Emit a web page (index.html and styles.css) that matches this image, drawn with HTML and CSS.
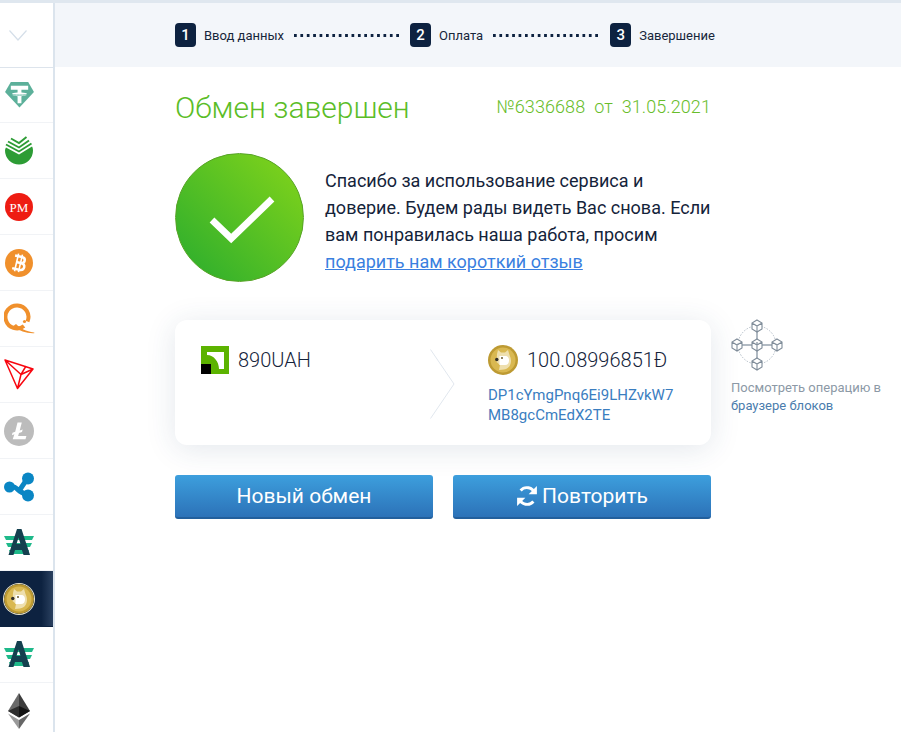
FILE: index.html
```html
<!DOCTYPE html>
<html lang="ru">
<head>
<meta charset="utf-8">
<title>Обмен завершен</title>
<link rel="stylesheet" href="styles.css">
</head>
<body>
<div class="page">
  <aside class="rail">
    <div class="rail-top">
      <svg width="18" height="11" viewBox="0 0 18 11"><path d="M.5.5 9 10 17.5.5" fill="none" stroke="#d5dfe9" stroke-width="1.2"/></svg>
    </div>
    <div class="coin">
      <svg width="31" height="27" viewBox="0 0 32 28"><path d="M7 1h18l6 10.500L16 27.500 1 11.500z" fill="#5cb09a"/><path d="M7 5h18v4h-7v3c3 .2 6 .8 6 1.800s-3 1.700-6 1.900V23h-4v-7.300c-3-.2-6-.9-6-1.900s3-1.600 6-1.800V9H7z" fill="#fff"/><path d="M6 13.500c2 1.500 18 1.500 20 0" fill="none" stroke="#5cb09a" stroke-width="1"/></svg>
    </div>
    <div class="coin">
      <svg width="30" height="30" viewBox="0 0 30 30"><path d="M1 14.500A14 14 0 1 0 29 14.500C29 13 28.700 11.500 28 10.500L15 18.500 2 11.500C1.300 12.500 1 13.500 1 14.500z" fill="#2d9c35"/><path d="M2 8.500 15 15.500 27.500 7.500M4 5.500 15 11.500 25 4.500M7 2.500 15 7 22.500 1" fill="none" stroke="#2d9c35" stroke-width="1.900"/></svg>
    </div>
    <div class="coin">
      <svg width="28" height="28" viewBox="0 0 28 28"><circle cx="14" cy="14" r="14" fill="#ee1c12"/><text x="14" y="19" class="pm" text-anchor="middle">PM</text></svg>
    </div>
    <div class="coin">
      <svg width="28" height="28" viewBox="0 0 28 28"><circle cx="14" cy="14" r="14" fill="#f0902c"/><g transform="rotate(13 14 14)"><path d="M11.500 5v18M15.500 5v18" stroke="#fff" stroke-width="1.600"/><path d="M8.500 7.500h7c2.500 0 3.500 1.400 3.500 3s-1 3.100-3.500 3.100c3 0 4.500 1.500 4.500 3.300s-1.500 3.600-4.500 3.600h-7M11 13.600h4.500" fill="none" stroke="#fff" stroke-width="2.500"/></g></svg>
    </div>
    <div class="coin">
      <svg width="31" height="31" viewBox="0 0 31 31"><path d="M20 23A11.500 11.500 0 1 1 23.500 18.500" fill="none" stroke="#f0902c" stroke-width="4"/><path d="M12 21c4 4 10 7.500 18 8.500.8.200.5.800-.5.800-7 .2-14-2-20.500-7z" fill="#f0902c"/><circle cx="20.500" cy="18.500" r="1.600" fill="#f0902c"/></svg>
    </div>
    <div class="coin">
      <svg width="30" height="31" viewBox="0 0 30 31"><path d="M1 1 29 10 13.500 29.500zM1 1 17 15.500 13.500 29.500M17 15.500 29 10M17 15.500 22 7" fill="none" stroke="#f8060f" stroke-width="1.500" stroke-linejoin="round"/></svg>
    </div>
    <div class="coin">
      <svg width="30" height="30" viewBox="0 0 30 30"><circle cx="15" cy="15" r="15" fill="#bcbcbc"/><path d="M13.500 6.500h4.300l-2.100 8 3-1.100-.7 2.500-3 1.100-.9 3h8.300l-.9 3.300H8.700l1.700-5.100-2.500 1 .6-2.400 2.700-1z" fill="#fff"/></svg>
    </div>
    <div class="coin">
      <svg width="30" height="30" viewBox="0 0 30 30"><path d="M6 15c5-1 6 1 9 3.500 3-2.500 4-8 9-11.500M15 18.500c2.500 2 5 3 9 5" fill="none" stroke="#0a86c4" stroke-width="5"/><circle cx="5.500" cy="15" r="5.500" fill="#0a86c4"/><circle cx="24" cy="6.500" r="6" fill="#0a86c4"/><circle cx="24" cy="23.500" r="6" fill="#0a86c4"/></svg>
    </div>
    <div class="coin">
      <svg width="30" height="28" viewBox="0 0 30 28"><use href="#adv-mark"/></svg>
    </div>
    <div class="coin active">
      <svg class="doge-ringed" width="30" height="30" viewBox="0 0 30 30"><use href="#doge-mark"/></svg>
    </div>
    <div class="coin">
      <svg width="30" height="28" viewBox="0 0 30 28"><use href="#adv-mark"/></svg>
    </div>
    <div class="coin">
      <svg width="22" height="36" viewBox="0 0 22 36"><path d="M11 0 0 18l11 6.500z" fill="#6a6a6a"/><path d="M11 0l11 18-11 6.500z" fill="#3d3d3d"/><path d="M0 18l11-5v11.500z" fill="#2e2e2e"/><path d="M22 18l-11-5v11.500z" fill="#151515"/><path d="M0 20.500 11 36v-9z" fill="#9a9a9a"/><path d="M22 20.500 11 36v-9z" fill="#666"/></svg>
    </div>
  </aside>

  <main class="main">
    <nav class="steps">
      <span class="num">1</span><span class="label">Ввод данных</span><span class="dots dots-a"></span>
      <span class="num">2</span><span class="label">Оплата</span><span class="dots dots-b"></span>
      <span class="num">3</span><span class="label">Завершение</span>
    </nav>

    <section class="content">
      <div class="column">
        <header class="title-row">
          <h1>Обмен завершен</h1>
          <p class="order">№6336688&nbsp; от&nbsp; 31.05.2021</p>
        </header>

        <div class="thanks">
          <div class="check">
            <svg width="70" height="54" viewBox="0 0 70 54"><path d="M7 29 26.200 47.500 67 8" fill="none" stroke="#fff" stroke-width="6.800"/></svg>
          </div>
          <p>Спасибо за использование сервиса и доверие. Будем рады видеть Вас снова. Если вам понравилась наша работа, просим <a href="#">подарить нам короткий отзыв</a></p>
        </div>

        <div class="card">
          <div class="side from">
            <div class="amount">
              <svg width="28" height="28" viewBox="0 0 28 28"><rect width="28" height="28" fill="#5cb300"/><path d="M6 6h17v17h-5c0-7-5-14-12-14z" fill="#fff"/><path d="M0 18h10v10H0z" fill="#000"/></svg>
              <span>890UAH</span>
            </div>
          </div>
          <svg class="divider" width="25" height="70" viewBox="0 0 25 70"><path d="M.5.500 24 35 .5 69.500" fill="none" stroke="#e1e7ee" stroke-width="1"/></svg>
          <div class="side to">
            <div class="amount">
              <svg width="30" height="30" viewBox="0 0 30 30"><use href="#doge-mark"/></svg>
              <span>100.08996851Ð</span>
            </div>
            <a class="wallet" href="#">DP1cYmgPnq6Ei9LHZvkW7 MB8gcCmEdX2TE</a>
          </div>
        </div>

        <div class="actions">
          <a class="btn" href="#">Новый обмен</a>
          <a class="btn repeat" href="#">
            <svg width="22" height="22" viewBox="0 0 20 20"><path d="M17 7.500A7.500 7.500 0 0 0 4.200 5M3 12.500A7.500 7.500 0 0 0 15.800 15" fill="none" stroke="#fff" stroke-width="2.600"/><path d="M19 1v7.500h-7.500zM1 19v-7.500h7.500z" fill="#fff"/></svg>
            <span>Повторить</span>
          </a>
        </div>
      </div>

      <aside class="explorer">
        <svg width="52" height="52" viewBox="0 0 52 52">
          <circle cx="26" cy="26" r="19" fill="none" stroke="#a9b4bf" stroke-width=".9" stroke-dasharray="1.500 1.500"/>
          <path d="M26 11v30M11 26h30" stroke="#98a4b0" stroke-width="1.500"/>
          <g fill="#fff" stroke="#7f8c99" stroke-width="1.100">
            <path d="M26 1l5 3v6l-5 3-5-3V4zM21 4l5 3 5-3M26 7v6"/>
            <path d="M26 20l5 3v6l-5 3-5-3v-6zM21 23l5 3 5-3M26 26v6"/>
            <path d="M26 39l5 3v6l-5 3-5-3v-6zM21 42l5 3 5-3M26 45v6"/>
            <path d="M6 20l5 3v6l-5 3-5-3v-6zM1 23l5 3 5-3M6 26v6"/>
            <path d="M46 20l5 3v6l-5 3-5-3v-6zM41 23l5 3 5-3M46 26v6"/>
          </g>
        </svg>
        <p>Посмотреть операцию в <a href="#">браузере блоков</a></p>
      </aside>
    </section>
  </main>
</div>

<svg class="defs" width="0" height="0" aria-hidden="true">
  <defs>
    <g id="adv-mark">
      <path d="M0 7h30l-2 4H2zM2 14h26l-2 4H4zM5 21h20l-1.500 4h-17z" fill="#1fb98a"/>
      <path d="M13 0h4.500L26 26h-6.500l-1.600-5H11l-1.500 5H4.500zM12.500 15h4l-2-6.500z" fill="#14404f"/>
    </g>
    <g id="doge-mark">
      <circle cx="15" cy="15" r="15" fill="#bd9a32"/>
      <circle cx="15" cy="15" r="12.500" fill="#d9b851"/>
      <path d="M9 9 10 5l3 2.500h4L20 5l1.500 5c1.500 3 2 6 1 9-1 3-3 5-6.500 5.500L11 25l1-5-3.500-3z" fill="#eedfae"/>
      <path d="M11.500 11h5.500c3 0 4 2 4 4.500s-1.200 4.500-4 4.500h-5.500z" fill="#fff"/>
      <circle cx="8.800" cy="14.500" r="1.700" fill="#33302a"/>
      <circle cx="14" cy="13" r="1" fill="#6b5a2c"/>
    </g>
  </defs>
</svg>
</body>
</html>
```

FILE: styles.css
```css
* { box-sizing: border-box; }
html, body { margin: 0; height: 100%; }
body {
  overflow: hidden;
  background: #fff;
  font-family: Roboto, "Liberation Sans", sans-serif;
  color: #0f2138;
}
p, h1 { margin: 0; }
a { color: inherit; }
.defs { position: absolute; }

.page {
  display: flex;
  height: 732px;
  border-top: 3px solid #dfe7ef;
  overflow: hidden;
}

.rail {
  flex: 0 0 55px;
  width: 55px;
  min-width: 0;
  border-right: 2px solid #dbe4ed;
}
.rail-top {
  height: 65px;
  margin-bottom: -1px;
  display: flex;
  align-items: center;
  justify-content: center;
  padding-right: 17px;
  border-bottom: 1px solid #dde4ec;
}
.coin {
  height: 56px;
  display: flex;
  align-items: center;
  justify-content: center;
  border-bottom: 1px solid #f1f3f6;
  padding-right: 15px;
}
.coin.active {
  background: linear-gradient(90deg, #0d2240 78%, #2b4160 100%);
  border-bottom-color: #0d2240;
}
.doge-ringed { border-radius: 50%; box-shadow: 0 0 0 1px #e8e2c8; }
.pm { font: 13px "Liberation Serif", serif; fill: #fff; }

.main { flex: 1; min-width: 0; }

.steps {
  height: 64px;
  background: #f3f6fa;
  padding-left: 120px;
  display: flex;
  align-items: center;
  font-size: 13px;
  color: #17263a;
}
.num {
  width: 21px;
  height: 24px;
  border-radius: 4px;
  background: #0d2240;
  color: #fff;
  font-size: 15px;
  font-weight: 500;
  display: flex;
  align-items: center;
  justify-content: center;
  margin-right: 8px;
}
.dots {
  height: 3px;
  margin: 0 10px;
  background-image: linear-gradient(90deg, #0d2240 50%, transparent 50%);
  background-size: 6.400px 3px;
}
.dots-a { width: 106px; }
.dots-b { width: 108px; margin-right: 9px; }

.content {
  display: flex;
  padding-left: 120px;
}
.column { width: 536px; flex-shrink: 0; }

.title-row {
  display: flex;
  justify-content: space-between;
  align-items: center;
  height: 86px;
  padding-bottom: 6px;
}
h1 {
  font-size: 30px;
  font-weight: 300;
  color: #5bbd27;
}
.order {
  font-size: 18px;
  font-weight: 300;
  color: #68bd2a;
  margin-bottom: 2px;
  letter-spacing: .08px;
}

.thanks {
  display: flex;
  gap: 21px;
  height: 167px;
}
.check {
  flex: 0 0 129px;
  width: 129px;
  height: 129px;
  border-radius: 50%;
  background: linear-gradient(45deg, #36b22b 15%, #85d51a 100%);
  border: 1px solid #57a426;
  display: flex;
  align-items: center;
  justify-content: center;
}
.thanks p {
  font-size: 18px;
  line-height: 27px;
  padding-top: 14px;
  color: #14233a;
}
.thanks a { color: #3a7fe0; }

.card {
  height: 125px;
  background: #fff;
  border-radius: 12px;
  box-shadow: 0 4px 30px rgba(40, 70, 110, .13);
  display: flex;
  padding: 26px 0 0 26px;
}
.side.from { width: 229px; }
.side.to { flex: 1; margin-left: 33px; }
.divider { margin-top: 3px; }
.amount {
  display: flex;
  align-items: center;
  gap: 9px;
  font-size: 20px;
  font-weight: 300;
  color: #14233a;
}
.from .amount { align-items: flex-start; }
.from .amount span { line-height: 28px; }
.to .amount { margin-top: -1px; }
.wallet {
  display: block;
  width: 195px;
  margin-top: 10px;
  font-size: 15px;
  line-height: 20px;
  color: #3a7dbf;
  text-decoration: none;
}

.actions {
  display: flex;
  gap: 20px;
  margin-top: 30px;
}
.btn {
  flex: 1;
  height: 44px;
  border-radius: 3px;
  background: linear-gradient(180deg, #3d9fdd 0%, #2c72b8 100%);
  border-bottom: 2px solid #225f9c;
  color: #fff;
  font-size: 21px;
  display: flex;
  align-items: center;
  justify-content: center;
  text-decoration: none;
  gap: 4px;
}

.explorer {
  flex: 0 0 160px;
  margin-left: 20px;
  padding-top: 252px;
  font-size: 13px;
  line-height: 18px;
  color: #8c99a6;
}
.explorer svg { display: block; margin-bottom: 8px; }
.explorer a { color: #4a7cad; text-decoration: none; }
```
